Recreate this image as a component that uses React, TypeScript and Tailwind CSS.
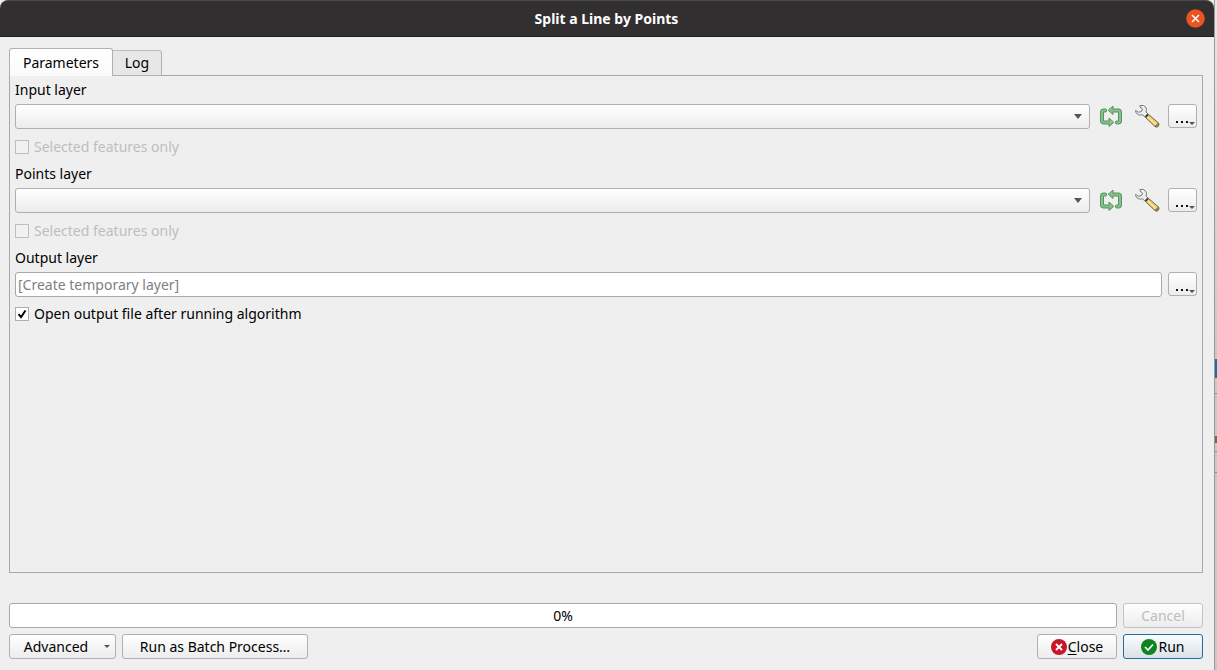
import { useState } from "react";

const buttonBase =
  "flex h-[25px] shrink-0 items-center justify-center rounded-[3px] border border-[#b0b0b0] bg-linear-to-b from-white to-[#ececec] whitespace-nowrap";

function IterateIcon() {
  return (
    <svg width="24" height="24" viewBox="0 -1 24 24" aria-hidden="true" strokeLinejoin="round" strokeLinecap="round">
      <g fill="none" stroke="#4f9159" strokeWidth="4">
        <path d="M6 5.500H5Q3 5.500 3 7.500V15.500Q3 17.500 5 17.500H9" />
        <path d="M18 17.500H19Q21 17.500 21 15.500V7.500Q21 5.500 19 5.500H15" />
      </g>
      <g fill="#8abf8e" stroke="#4f9159" strokeWidth="1">
        <path d="M10 13.500V21.500L14.500 17.500Z" />
        <path d="M14 1.500V9.500L9.500 5.500Z" />
      </g>
      <g fill="none" stroke="#8abf8e" strokeWidth="2.200">
        <path d="M6 5.500H5Q3 5.500 3 7.500V15.500Q3 17.500 5 17.500H11" />
        <path d="M18 17.500H19Q21 17.500 21 15.500V7.500Q21 5.500 19 5.500H13" />
      </g>
    </svg>
  );
}

function WrenchIcon() {
  return (
    <svg width="26" height="24" viewBox="0 0 26 24" aria-hidden="true" strokeLinejoin="round">
      <path
        d="M11 13L14 10L24.500 19Q25.500 21 24 22.500Q22.500 23.500 21 22.500Z"
        fill="#ecd06b"
        stroke="#6e6444"
        strokeWidth="1"
      />
      <path d="M13 12.500L22 20.500" stroke="#f8e9a5" strokeWidth="1.200" />
      <path d="M21 22L24.500 19Q25.500 21 24 22.500Q22.500 23.500 21 22.500Z" fill="#98865a" stroke="#6e6444" strokeWidth=".6" />
      <path
        d="M6 1.500Q10 0.500 12 3.500Q13 5.500 12 8L14.500 10.500L11.500 13.500L8.500 10.800Q4 12 2 8.500Q1.500 7.500 1.500 6.500L4.500 8.300L7.500 7.500L8.500 5L6 3Z"
        fill="#eeeeec"
        stroke="#777"
        strokeWidth="1"
      />
      <path d="M11.500 13L14 10.500" stroke="#393632" strokeWidth="2" />
    </svg>
  );
}

function DotsButton({ label }: { label: string }) {
  return (
    <button
      type="button"
      aria-label={label}
      className="flex h-6 w-[29px] shrink-0 items-end justify-end self-start rounded-[3px] border border-[#b0b0b0] bg-linear-to-b from-white to-[#ececec] pr-px pb-[2px]"
    >
      <svg width="21" height="7" viewBox="0 0 21 7" aria-hidden="true">
        <path d="M2 3h2v2H2zM7 3h2v2H7zM12 3h2v2h-2z" fill="#111" />
        <path d="M15 4h6l-3 3z" fill="#555" />
      </svg>
    </button>
  );
}

function CheckOption({ id, label, disabled, initial }: { id: string; label: string; disabled?: boolean; initial?: boolean }) {
  const [on, setOn] = useState(!!initial);
  return (
    <div className="flex h-5 items-center gap-[5px]">
      <span className="grid size-[14px] shrink-0">
        <input
          id={id}
          type="checkbox"
          checked={on}
          disabled={disabled}
          onChange={(e) => setOn(e.target.checked)}
          className="col-start-1 row-start-1 size-[14px] appearance-none border border-[#aeaeae] bg-white disabled:border-[#bebebe] disabled:bg-[#f1f1f1]"
        />
        {on && (
          <svg viewBox="0 0 14 14" aria-hidden="true" className="pointer-events-none col-start-1 row-start-1 size-[14px]">
            <path d="M3.500 7.200L6 10.200L10.500 3.500" fill="none" stroke="#000" strokeWidth="2" />
          </svg>
        )}
      </span>
      <label htmlFor={id} className={disabled ? "text-[#bebebe]" : ""}>
        {label}
      </label>
    </div>
  );
}

function LayerField({ id, label }: { id: string; label: string }) {
  return (
    <div className="mb-[7px]">
      <label htmlFor={id} className="block h-6">
        {label}
      </label>
      <div className="flex items-start">
        <div className="grid flex-1 items-center">
          <select
            id={id}
            className="col-start-1 row-start-1 h-[25px] w-full appearance-none rounded-[3px] border border-[#b0b0b0] bg-linear-to-b from-white to-[#ececec] px-2"
          />
          <svg
            width="8"
            height="5"
            viewBox="0 0 8 5"
            aria-hidden="true"
            className="pointer-events-none col-start-1 row-start-1 mr-2 justify-self-end"
          >
            <path d="M0 0h8L4 5z" fill="#555" />
          </svg>
        </div>
        <button type="button" aria-label={`Iterate over ${label}`} className="ml-[9px]">
          <IterateIcon />
        </button>
        <button type="button" aria-label={`Advanced options for ${label}`} className="mr-2 ml-[11px]">
          <WrenchIcon />
        </button>
        <DotsButton label={`Browse ${label}`} />
      </div>
      <div className="pt-2">
        <CheckOption id={`${id}-selected`} label="Selected features only" disabled />
      </div>
    </div>
  );
}

export default function App() {
  return (
    <div className="flex min-h-screen bg-[#c8c8c8] font-['Noto_Sans',sans-serif] text-sm leading-5 text-black">
      <div className="flex flex-1 flex-col border-r border-[#999] bg-[#efefef]">
        <header className="grid h-[37px] grid-cols-[1fr_auto_1fr] items-center rounded-t-lg border-t border-b border-t-[#4b4949] border-b-[#1f1d1d] bg-[#312f2f] pr-[9px]">
          <h1 className="col-start-2 pl-2 font-bold text-white">Split a Line by Points</h1>
          <button type="button" aria-label="Close window" className="justify-self-end">
            <svg width="19" height="19" viewBox="0 0 19 19" aria-hidden="true">
              <circle cx="9.500" cy="9.500" r="9.300" fill="#e95420" />
              <path d="M6 6l7 7M13 6l-7 7" stroke="#fff" strokeWidth="1.500" />
            </svg>
          </button>
        </header>

        <main className="flex flex-1 flex-col pt-[11px] pr-[11px] pb-[11px] pl-[9px]">
          <div role="tablist" className="z-10 -mb-px flex items-end">
            <button
              type="button"
              role="tab"
              aria-selected="true"
              className="h-7 w-[104px] rounded-t-[3px] border border-b-0 border-[#b0b0b0] bg-linear-to-b from-white to-[#fafafa]"
            >
              Parameters
            </button>
            <button
              type="button"
              role="tab"
              aria-selected="false"
              className="h-[26px] w-[49px] rounded-tr-[3px] border border-l-0 border-[#b0b0b0] border-t-[#bdbdbd] bg-[#e7e7e7]"
            >
              Log
            </button>
          </div>

          <section role="tabpanel" aria-label="Parameters" className="flex-1 border border-[#a8a8a8] pt-1 pr-[5px] pl-[5px]">
            <LayerField id="input-layer" label="Input layer" />
            <LayerField id="points-layer" label="Points layer" />
            <label htmlFor="output-layer" className="block h-6">
              Output layer
            </label>
            <div className="flex items-center gap-[6px]">
              <input
                id="output-layer"
                type="text"
                placeholder="[Create temporary layer]"
                className="h-[25px] min-w-0 flex-1 rounded-[3px] border border-[#a8a8a8] bg-white px-[2px] placeholder:text-[#808080]"
              />
              <DotsButton label="Browse output layer" />
            </div>
            <div className="pt-[7px]">
              <CheckOption id="open-output" label="Open output file after running algorithm" initial />
            </div>
          </section>

          <div className="mt-[30px] flex gap-[6px]">
            <div
              role="progressbar"
              aria-label="Progress"
              aria-valuenow={0}
              aria-valuemin={0}
              aria-valuemax={100}
              className="flex h-[25px] flex-1 items-center justify-center rounded-[3px] border border-[#a8a8a8] bg-white"
            >
              0%
            </div>
            <button type="button" disabled className={`${buttonBase} w-20 border-[#c4c4c4] text-[#bebebe]`}>
              Cancel
            </button>
          </div>
          <div className="mt-[6px] flex gap-[6px]">
            <button type="button" className={`${buttonBase} w-[107px] gap-4`}>
              <span className="ml-[9px]">Advanced</span>
              <svg width="6" height="3" viewBox="0 0 6 3" aria-hidden="true">
                <path d="M0 0h6L3 3z" fill="#555" />
              </svg>
            </button>
            <button type="button" className={`${buttonBase} w-[186px]`}>
              Run as Batch Process…
            </button>
            <button type="button" className={`${buttonBase} ml-auto w-20 gap-px`}>
              <svg width="16" height="16" viewBox="0 0 16 16" aria-hidden="true">
                <circle cx="8" cy="8" r="8" fill="#c7162b" />
                <path d="M5 5l6 6M11 5l-6 6" stroke="#fff" strokeWidth="1.800" />
              </svg>
              <span>
                <span className="underline underline-offset-2">C</span>lose
              </span>
            </button>
            <button
              type="button"
              className="flex h-[25px] w-20 shrink-0 items-center justify-center gap-px rounded-[3px] border border-[#1f6e9c] bg-linear-to-b from-[#fafcfd] to-[#d9e1e8]"
            >
              <svg width="16" height="16" viewBox="0 0 16 16" aria-hidden="true">
                <circle cx="8" cy="8" r="8" fill="#0e8420" />
                <path d="M4 8l3 3 5-5.500" fill="none" stroke="#fff" strokeWidth="1.700" />
              </svg>
              Run
            </button>
          </div>
        </main>
      </div>
      <div aria-hidden="true" className="flex w-0.5 flex-col">
        <div className="h-[359px] bg-linear-to-b from-[#e8e8e8] to-[#c8c8c8]" />
        <div className="h-[19px] bg-[#1f6e9c]" />
        <div className="h-4 border-b border-[#929292]" />
        <div className="h-[42px]" />
        <div className="h-[7px] bg-[#756a42]" />
        <div className="h-[9px] border-b border-[#929292]" />
        <div className="h-[21px] border-b border-[#929292]" />
      </div>
    </div>
  );
}
